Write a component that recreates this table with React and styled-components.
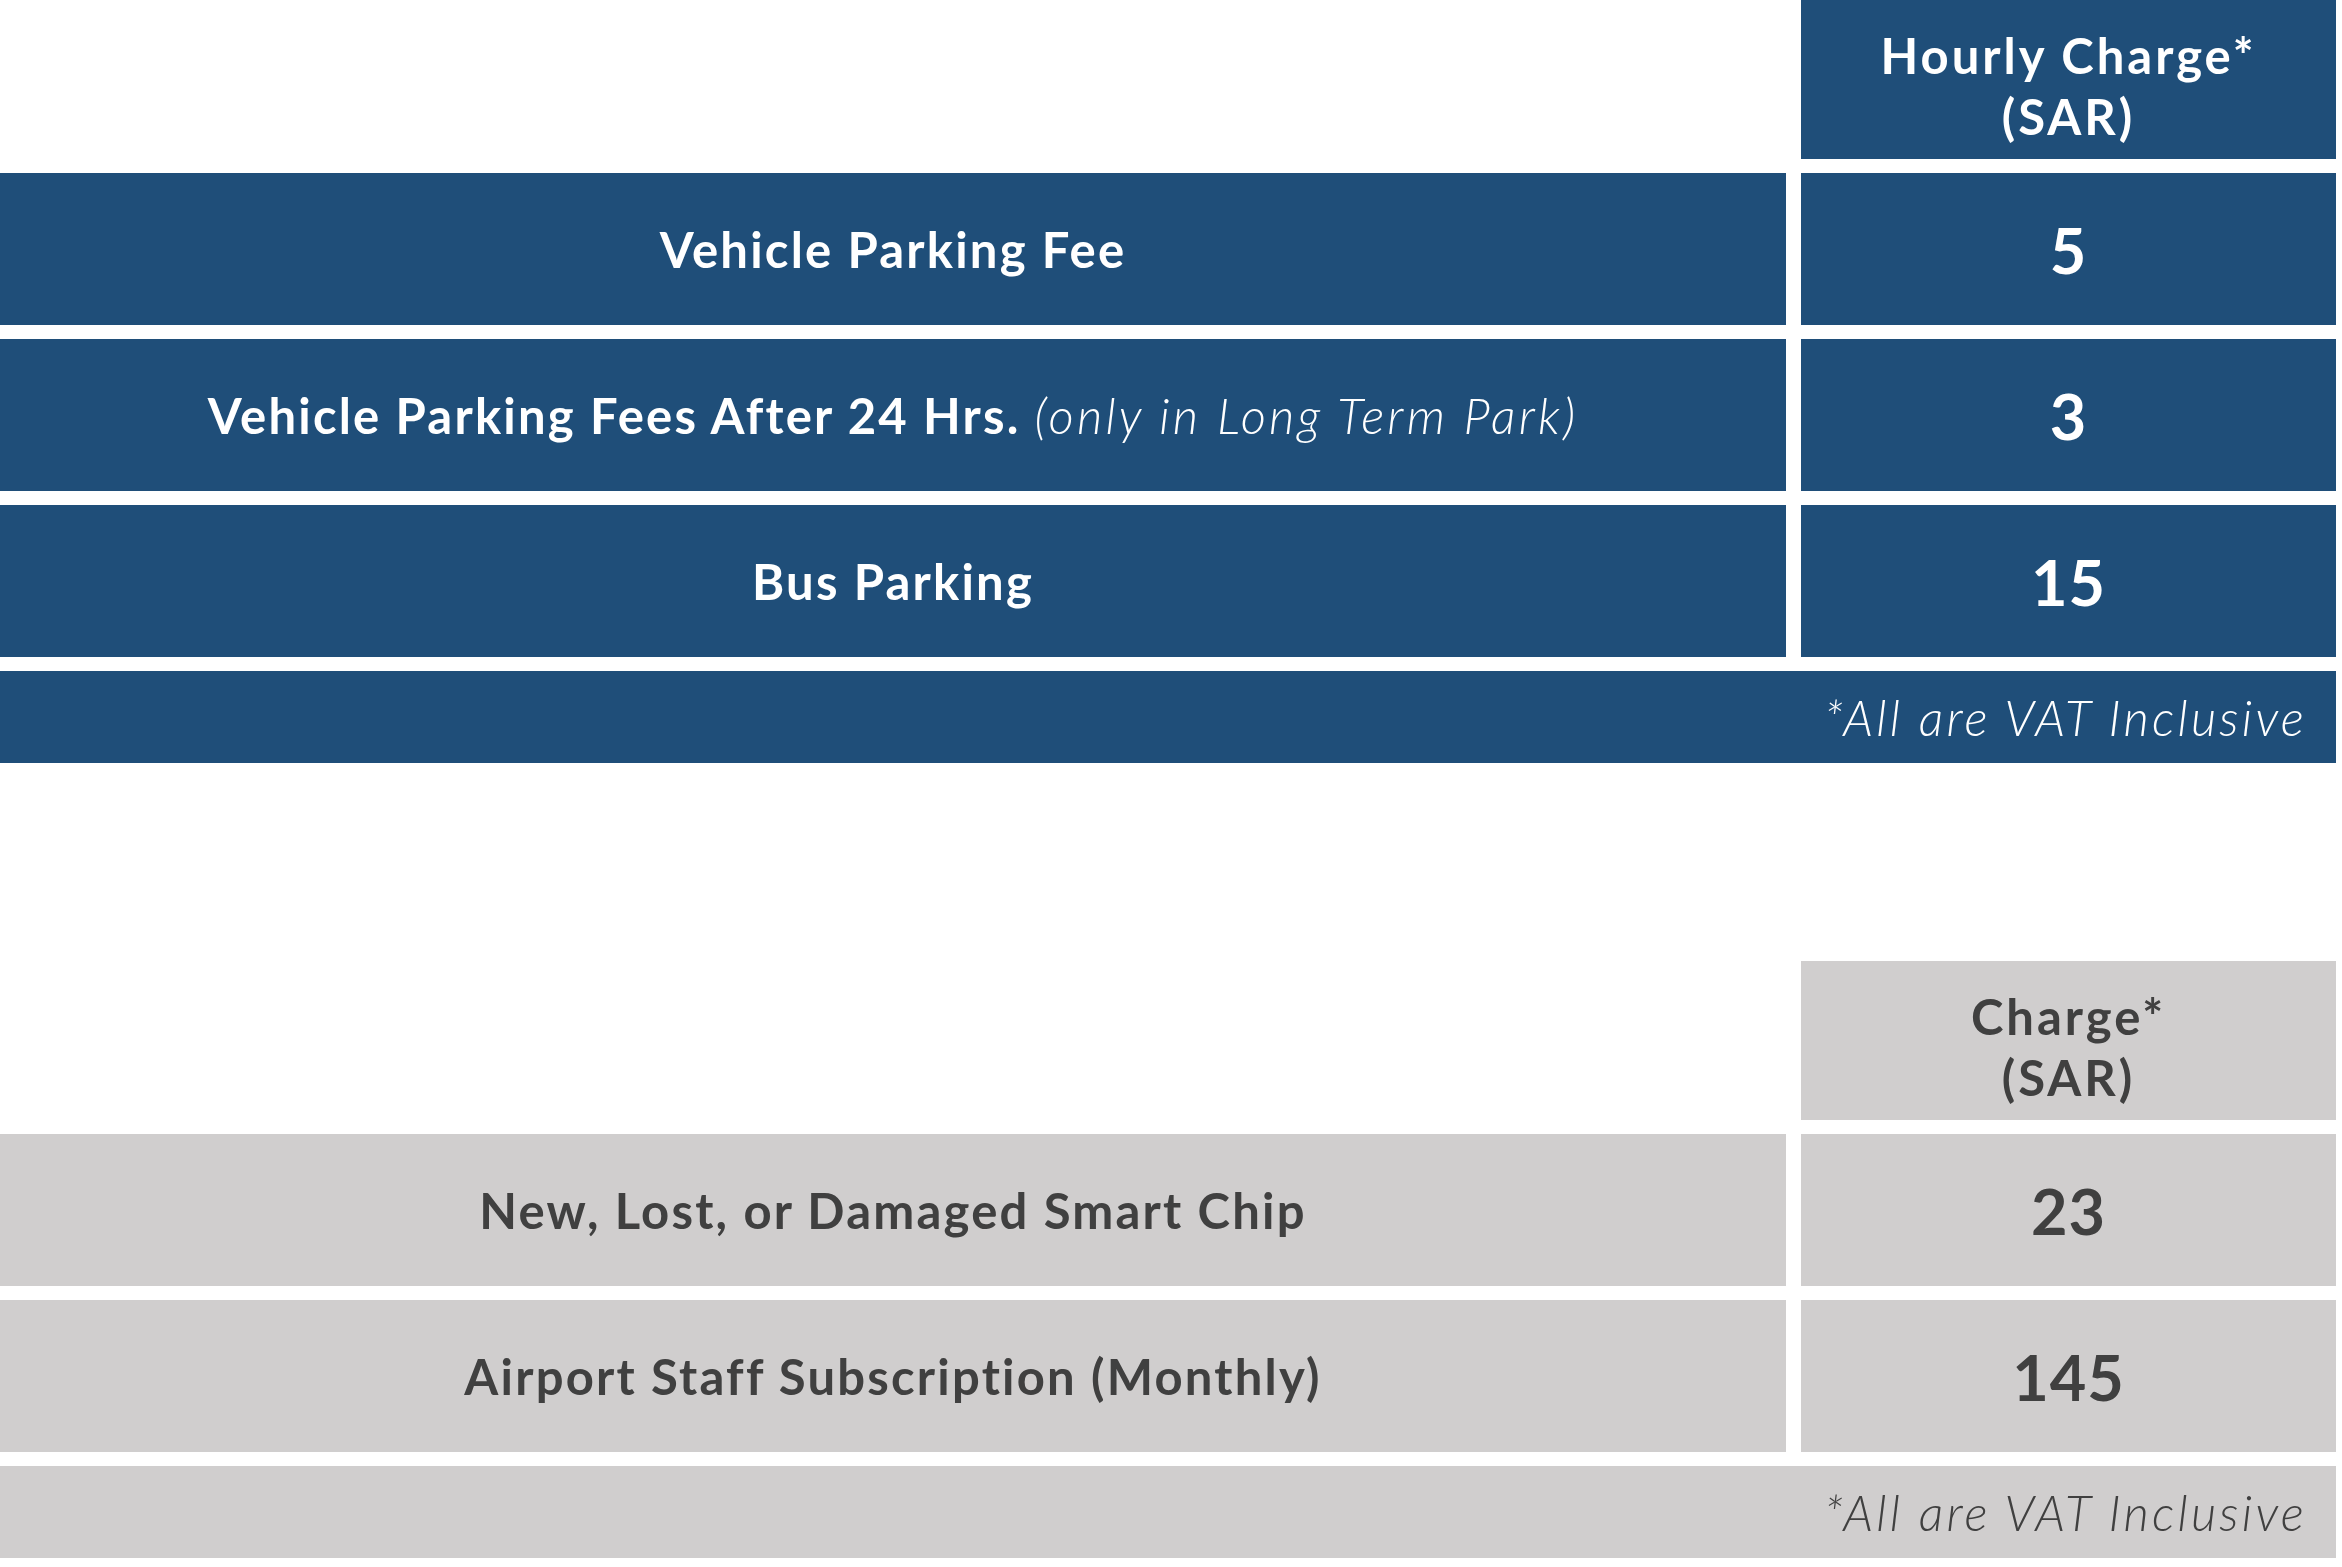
import React from "react";
import styled, { createGlobalStyle, css } from "styled-components";

const GlobalStyle = createGlobalStyle`
  html, body {
    margin: 0;
    padding: 0;
    background: #ffffff;
  }
  body {
    font-family: "Lato", "Liberation Sans", sans-serif;
  }
`;

const palettes = {
  blue: { bg: "#1f4e79", fg: "#ffffff" },
  gray: { bg: "#d0cece", fg: "#404040" },
};

const Page = styled.div`
  display: flex;
  flex-direction: column;
  gap: 198px;
  width: 2336px;
`;

const Table = styled.div`
  display: grid;
  grid-template-columns: 1786px 535px;
  column-gap: 15px;
  row-gap: 14px;
  grid-template-rows: 159px ${(p) => `repeat(${p.$rows}, 152px)`} 92px;
`;

const cellBase = css`
  background: ${(p) => palettes[p.$tone].bg};
  color: ${(p) => palettes[p.$tone].fg};
  display: flex;
  align-items: center;
  justify-content: center;
  text-align: center;
`;

const HeaderCell = styled.div`
  ${cellBase}
  grid-column: 2;
  flex-direction: column;
  font-weight: 700;
  font-size: 49px;
  line-height: 61px;
  letter-spacing: 3px;
  padding-top: 12px;
  box-sizing: border-box;
`;

const LabelCell = styled.div`
  ${cellBase}
  grid-column: 1;
  font-weight: 700;
  font-size: 49px;
  letter-spacing: 2.2px;
  white-space: nowrap;
`;

const Note = styled.span`
  font-weight: 300;
  font-style: italic;
  letter-spacing: 3.2px;
  margin-left: 14px;
`;

const ValueCell = styled.div`
  ${cellBase}
  grid-column: 2;
  font-weight: 700;
  font-size: 63px;
  letter-spacing: 1px;
`;

const FooterCell = styled.div`
  ${cellBase}
  grid-column: 1 / -1;
  justify-content: flex-end;
  padding-right: 29px;
  font-weight: 300;
  font-style: italic;
  font-size: 49px;
  letter-spacing: 3.2px;
`;

const FeeTable = ({ tone, header, rows }) => (
  <Table $rows={rows.length}>
    <HeaderCell $tone={tone}>
      {header.map((line) => (
        <span key={line}>{line}</span>
      ))}
    </HeaderCell>
    {rows.map((r) => (
      <React.Fragment key={r.value}>
        <LabelCell $tone={tone}>
          {r.label}
          {r.note && <Note>{r.note}</Note>}
        </LabelCell>
        <ValueCell $tone={tone}>{r.value}</ValueCell>
      </React.Fragment>
    ))}
    <FooterCell $tone={tone}>*All are VAT Inclusive</FooterCell>
  </Table>
);

export default function App() {
  return (
    <>
      <GlobalStyle />
      <Page>
        <FeeTable
          tone="blue"
          header={["Hourly Charge*", "(SAR)"]}
          rows={[
            { label: "Vehicle Parking Fee", value: "5" },
            {
              label: "Vehicle Parking Fees After 24 Hrs.",
              note: "(only in Long Term Park)",
              value: "3",
            },
            { label: "Bus Parking", value: "15" },
          ]}
        />
        <FeeTable
          tone="gray"
          header={["Charge*", "(SAR)"]}
          rows={[
            { label: "New, Lost, or Damaged Smart Chip", value: "23" },
            { label: "Airport Staff Subscription (Monthly)", value: "145" },
          ]}
        />
      </Page>
    </>
  );
}
